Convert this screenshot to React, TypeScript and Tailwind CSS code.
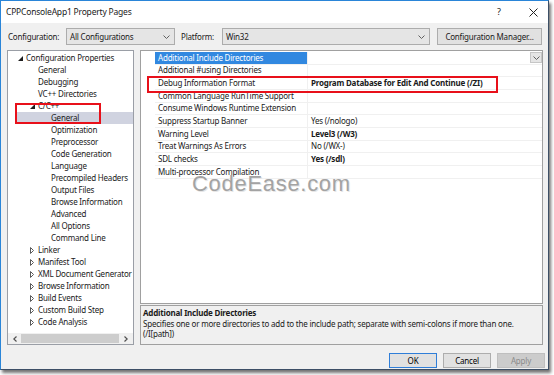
import React from "react";

type TreeItem = {
  label: string;
  level: number;
  arrow?: "open" | "closed";
  selected?: boolean;
};

const treeItems: TreeItem[] = [
  { label: "Configuration Properties", level: 0, arrow: "open" },
  { label: "General", level: 1 },
  { label: "Debugging", level: 1 },
  { label: "VC++ Directories", level: 1 },
  { label: "C/C++", level: 1, arrow: "open" },
  { label: "General", level: 2, selected: true },
  { label: "Optimization", level: 2 },
  { label: "Preprocessor", level: 2 },
  { label: "Code Generation", level: 2 },
  { label: "Language", level: 2 },
  { label: "Precompiled Headers", level: 2 },
  { label: "Output Files", level: 2 },
  { label: "Browse Information", level: 2 },
  { label: "Advanced", level: 2 },
  { label: "All Options", level: 2 },
  { label: "Command Line", level: 2 },
  { label: "Linker", level: 1, arrow: "closed" },
  { label: "Manifest Tool", level: 1, arrow: "closed" },
  { label: "XML Document Generator", level: 1, arrow: "closed" },
  { label: "Browse Information", level: 1, arrow: "closed" },
  { label: "Build Events", level: 1, arrow: "closed" },
  { label: "Custom Build Step", level: 1, arrow: "closed" },
  { label: "Code Analysis", level: 1, arrow: "closed" },
];

// property grid rows: [name, value, bold value]
const props: [string, string, boolean][] = [
  ["Additional Include Directories", "", false],
  ["Additional #using Directories", "", false],
  ["Debug Information Format", "Program Database for Edit And Continue (/ZI)", true],
  ["Common Language RunTime Support", "", false],
  ["Consume Windows Runtime Extension", "", false],
  ["Suppress Startup Banner", "Yes (/nologo)", false],
  ["Warning Level", "Level3 (/W3)", true],
  ["Treat Warnings As Errors", "No (/WX-)", false],
  ["SDL checks", "Yes (/sdl)", true],
  ["Multi-processor Compilation", "", false],
];

const padFor = ["pl-[6px]", "pl-[18px]", "pl-[31px]"];

function Chevron() {
  return (
    <svg width="7" height="4" viewBox="0 0 7 4">
      <polyline points="0.5,0.5 3.5,3.5 6.5,0.5" fill="none" stroke="#606060" strokeWidth="1" />
    </svg>
  );
}

function Arrow({ kind }: { kind?: "open" | "closed" }) {
  if (kind === "open") {
    return (
      <svg width="5" height="5" viewBox="0 0 5 5">
        <polygon points="5,0 5,5 0,5" fill="#1e1e1e" />
      </svg>
    );
  }
  if (kind === "closed") {
    return (
      <svg width="4" height="7" viewBox="0 0 4 7">
        <polygon points="0.5,0.5 3.5,3.5 0.5,6.5" fill="none" stroke="#5a5a5a" strokeWidth="1" />
      </svg>
    );
  }
  return null;
}

function Combo({ text, width }: { text: string; width: string }) {
  return (
    <div
      className={`${width} h-[17px] bg-[#e5e5e5] border border-[#acacac] flex items-center justify-between pl-[3px] pr-[4px]`}
    >
      <span>{text}</span>
      <Chevron />
    </div>
  );
}

function Tree() {
  return (
    <div className="relative w-[127px] h-[295px] bg-white border border-[#9a9ea6] flex flex-col">
      <div className="flex-1 pt-[1px]">
        {treeItems.map((item, i) => (
          <div key={i} className="h-[12px] flex items-center relative">
            {item.selected && (
              <div className="absolute left-[7px] right-0 top-0 bottom-0 bg-[#d0d3e0]" />
            )}
            <div className={`relative flex items-center ${padFor[item.level]}`}>
              <div className="w-[12px] flex justify-center items-center">
                <Arrow kind={item.arrow} />
              </div>
              <span className="whitespace-nowrap">{item.label}</span>
            </div>
          </div>
        ))}
      </div>
      {/* horizontal scrollbar */}
      <div className="h-[11px] mb-[0px] bg-[#f0f0f0] flex items-center">
        <div className="w-[13px] flex justify-center">
          <svg width="4" height="6" viewBox="0 0 4 6">
            <polyline points="3.5,0.5 0.8,3 3.5,5.5" fill="none" stroke="#505050" strokeWidth="1.2" />
          </svg>
        </div>
        <div className="w-[98px] h-[9px] bg-[#cdcdcd]" />
        <div className="flex-1 flex justify-center">
          <svg width="4" height="6" viewBox="0 0 4 6">
            <polyline points="0.5,0.5 3.2,3 0.5,5.5" fill="none" stroke="#505050" strokeWidth="1.2" />
          </svg>
        </div>
      </div>
      {/* red highlight around C/C++ > General */}
      <div className="absolute left-[7px] top-[52px] w-[86px] h-[21px] border-2 border-[#e8101a]" />
    </div>
  );
}

function Grid() {
  return (
    <div className="relative h-[254px] bg-white border border-[#a0a0a0] pt-[1px] overflow-hidden">
      {props.map(([name, value, bold], i) => (
        <div key={i} className="h-[12.67px] flex">
          <div className="w-[14px]" />
          <div
            className={`w-[153px] flex items-center pl-[3px] border-b border-r border-[#f0f0f0] whitespace-nowrap ${
              i === 0 ? "bg-[#3188e0] text-white" : ""
            }`}
          >
            {name}
          </div>
          <div
            className={`flex-1 flex items-center justify-between pl-[3px] border-b border-[#f0f0f0] whitespace-nowrap ${
              bold ? "font-bold" : ""
            }`}
          >
            <span>{value}</span>
            {i === 0 && (
              <div className="w-[12px] h-[11px] bg-[#e5e5e5] border border-[#c6c6c6] flex items-center justify-center">
                <Chevron />
              </div>
            )}
          </div>
        </div>
      ))}
      {/* red highlight around Debug Information Format */}
      <div className="absolute left-[6px] top-[25px] w-[351px] h-[17px] border-2 border-[#e8101a]" />
      {/* watermark */}
      <div className="absolute left-[51px] top-[122px] text-[22px] leading-none tracking-[0.7px] text-[#a3a3a3] font-['Liberation_Sans',Arial,sans-serif] [text-shadow:1px_1px_0_#e6e6e6]">
        CodeEase.com
      </div>
    </div>
  );
}

function Btn({ label, kind }: { label: string; kind?: "default" | "disabled" }) {
  const cls =
    kind === "default"
      ? "bg-[#e1e1e1] border-[#2f7ed8] text-black"
      : kind === "disabled"
      ? "bg-[#cccccc] border-[#bfbfbf] text-[#8a8a8a]"
      : "bg-[#e1e1e1] border-[#adadad] text-black";
  return (
    <div className={`w-[48px] h-[15px] border flex items-center justify-center ${cls}`}>
      {label}
    </div>
  );
}

export default function App() {
  return (
    <div className="w-[554px] h-[375px] bg-white overflow-hidden font-['Noto_Sans',sans-serif] text-[8px] tracking-[-0.2px] text-[#1a1a1a]">
      <div className="w-[549px] h-[370px] bg-[#f0f0f0] border border-[#2a85d8] border-r-[#3d4f66] border-b-[#3d4f66] flex flex-col shadow-[2px_3px_3px_rgba(0,0,0,0.55)]">
        {/* title bar */}
        <div className="h-[22px] bg-white flex items-center pl-[5px] text-[8.5px]">
          <span className="flex-1">CPPConsoleApp1 Property Pages</span>
          <span className="w-[10px] text-[9px] mr-[22px]">?</span>
          <svg width="9" height="9" viewBox="0 0 9 9" className="mr-[10px]">
            <line x1="0.5" y1="0.5" x2="8.5" y2="8.5" stroke="#222" strokeWidth="1" />
            <line x1="8.5" y1="0.5" x2="0.5" y2="8.5" stroke="#222" strokeWidth="1" />
          </svg>
        </div>

        {/* configuration row */}
        <div className="mt-[5px] h-[17px] flex items-center pl-[7px]">
          <span className="w-[58px]">Configuration:</span>
          <Combo text="All Configurations" width="w-[109px]" />
          <span className="w-[41px] ml-[6px]">Platform:</span>
          <Combo text="Win32" width="w-[208px]" />
          <div className="ml-[7px] w-[105px] h-[17px] bg-[#e1e1e1] border border-[#adadad] flex items-center justify-center">
            Configuration Manager...
          </div>
        </div>

        {/* main area */}
        <div className="mt-[5px] h-[295px] flex pl-[6px]">
          <Tree />
          <div className="ml-[6px] w-[403px] flex flex-col">
            <Grid />
            <div className="mt-[1px] h-[40px] border border-[#a0a0a0] bg-[#f0f0f0] pl-[2px] pt-[2px] leading-[10px]">
              <div className="font-bold">Additional Include Directories</div>
              <div className="mt-[1px]">
                Specifies one or more directories to add to the include path; separate with semi-colons if more than one.
              </div>
              <div>(/I[path])</div>
            </div>
          </div>
        </div>

        {/* buttons */}
        <div className="mt-[8px] h-[15px] flex justify-end gap-[6px] pr-[3px]">
          <Btn label="OK" kind="default" />
          <Btn label="Cancel" />
          <Btn label="Apply" kind="disabled" />
        </div>
      </div>
    </div>
  );
}
